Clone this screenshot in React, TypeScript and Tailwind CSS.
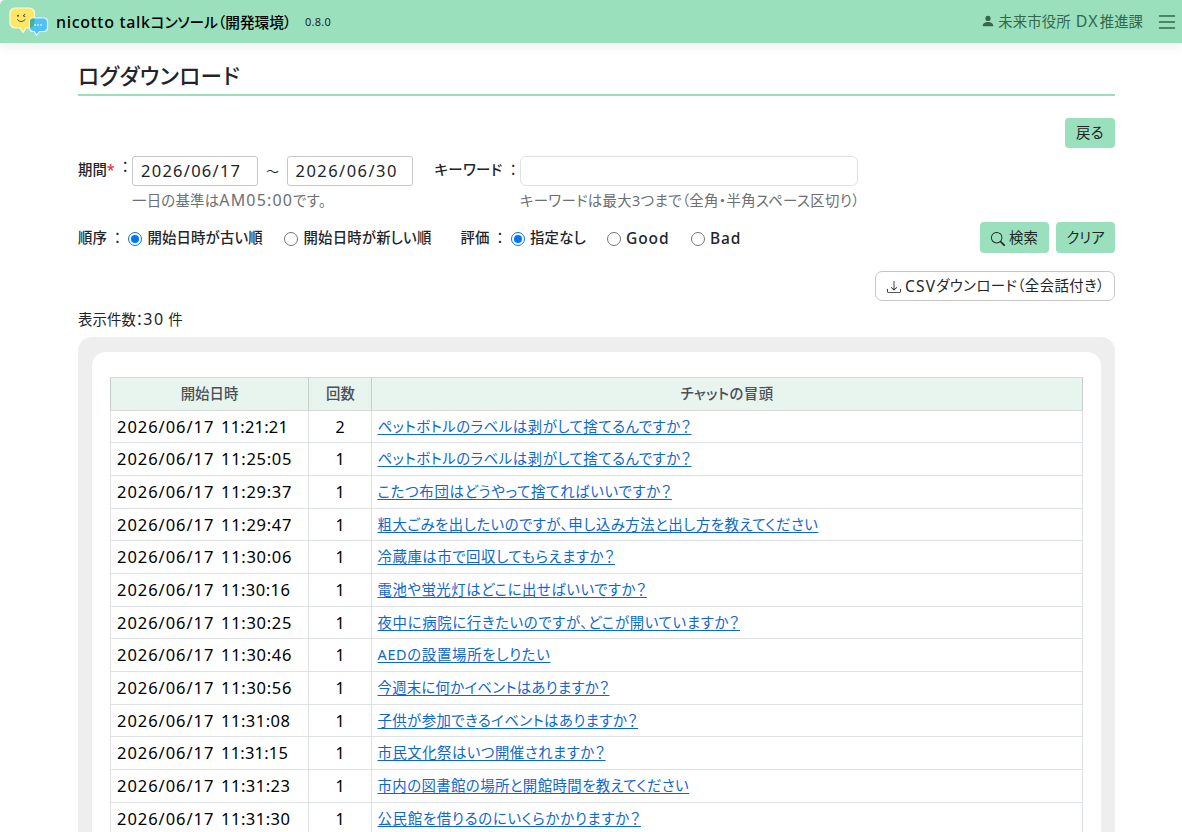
import React from "react";
import { BsDownload, BsList, BsPersonFill, BsSearch } from "react-icons/bs";

type Log = { time: string; timeClass: string; count: number; text: string; textClass: string };

const logs: Log[] = [
  { time: "11:21:21", timeClass: "tracking-[0.2px]", count: 2, text: "ペットボトルのラベルは剥がして捨てるんですか？", textClass: "tracking-[0.54px]" },
  { time: "11:25:05", timeClass: "tracking-[0.7px]", count: 1, text: "ペットボトルのラベルは剥がして捨てるんですか？", textClass: "tracking-[0.54px]" },
  { time: "11:29:37", timeClass: "tracking-[0.7px]", count: 1, text: "こたつ布団はどうやって捨てればいいですか？", textClass: "tracking-[0.71px]" },
  { time: "11:29:47", timeClass: "tracking-[0.7px]", count: 1, text: "粗大ごみを出したいのですが、申し込み方法と出し方を教えてください", textClass: "tracking-[0.5px]" },
  { time: "11:30:06", timeClass: "tracking-[0.7px]", count: 1, text: "冷蔵庫は市で回収してもらえますか？", textClass: "tracking-[0.56px]" },
  { time: "11:30:16", timeClass: "tracking-[0.5px]", count: 1, text: "電池や蛍光灯はどこに出せばいいですか？", textClass: "tracking-[0.54px]" },
  { time: "11:30:25", timeClass: "tracking-[0.7px]", count: 1, text: "夜中に病院に行きたいのですが、どこが開いていますか？", textClass: "tracking-[0.67px]" },
  { time: "11:30:46", timeClass: "tracking-[0.7px]", count: 1, text: "AEDの設置場所をしりたい", textClass: "tracking-[0.7px]" },
  { time: "11:30:56", timeClass: "tracking-[0.7px]", count: 1, text: "今週末に何かイベントはありますか？", textClass: "tracking-[0.27px]" },
  { time: "11:31:08", timeClass: "tracking-[0.5px]", count: 1, text: "子供が参加できるイベントはありますか？", textClass: "tracking-[0.44px]" },
  { time: "11:31:15", timeClass: "tracking-[0.2px]", count: 1, text: "市民文化祭はいつ開催されますか？", textClass: "tracking-[0.5px]" },
  { time: "11:31:23", timeClass: "tracking-[0.5px]", count: 1, text: "市内の図書館の場所と開館時間を教えてください", textClass: "tracking-[0.42px]" },
  { time: "11:31:30", timeClass: "tracking-[0.5px]", count: 1, text: "公民館を借りるのにいくらかかりますか？", textClass: "tracking-[0.72px]" },
];

function Logo() {
  return (
    <svg width="42" height="32" viewBox="0 0 42 32" className="shrink-0">
      <path
        d="M7 2h14.500a5 5 0 0 1 5 5V17a5 5 0 0 1-5 5H18l-3 4.500L12 22H7a5 5 0 0 1-5-5V7a5 5 0 0 1 5-5z"
        fill="#ffe766"
        stroke="#fff8d8"
        strokeWidth="1.200"
      />
      <circle cx="10" cy="9.800" r="1" fill="#4d4a31" />
      <path d="M17 8.300l-2 1.500 2 .7M9.500 13.700q3.700 4 7.500 0" fill="none" stroke="#4d4a31" strokeWidth="1" strokeLinecap="round" />
      <path
        d="M25 12h11a3.500 3.500 0 0 1 3.500 3.500V22a3.500 3.500 0 0 1-3.500 3.500H31.500L28.500 29.500l-2-4H25a3.500 3.500 0 0 1-3.500-3.500v-6.500A3.500 3.500 0 0 1 25 12z"
        fill="#4fc0fb"
        stroke="#e4f7ff"
        strokeWidth="1.200"
      />
      <path d="M25 12.500h1.500V17a5 5 0 0 1-4.500 4.800v-6.300a3 3 0 0 1 3-3z" fill="#47b08c" />
      <g fill="#d9f3ff">
        <circle cx="27" cy="19" r=".9" />
        <circle cx="30" cy="19" r=".9" />
        <circle cx="33" cy="19" r=".9" />
      </g>
    </svg>
  );
}

function Radio({ checked, children, className }: { checked?: boolean; children: React.ReactNode; className: string }) {
  return (
    <label className={`flex items-center whitespace-nowrap font-medium ${className}`}>
      <span
        className={`mr-[5.500px] mt-[3px] flex size-[14px] shrink-0 items-center justify-center rounded-full border bg-white ${
          checked ? "border-[#0075ff]" : "border-[#767676]"
        }`}
      >
        {checked && <span className="size-2 rounded-full bg-[#0075ff]" />}
      </span>
      {children}
    </label>
  );
}

export default function App() {
  return (
    <div className="h-[832px] overflow-hidden bg-white font-['Noto_Sans','Noto_Sans_CJK_JP',sans-serif] text-[14.4px] leading-[22px] text-[#212529] [font-feature-settings:'palt']">
      <header className="flex h-[43px] items-center rounded-tl-[5px] bg-[#9be0bc] pl-[8px] pr-[6px] whitespace-nowrap shadow-[0_2px_12px_rgba(0,0,0,0.09)]">
        <Logo />
        <h1 className="ml-[6px] w-[249px] text-[14.700px] leading-[20px] font-medium text-black">
          <span className="text-[16px] tracking-[0.65px]">nicotto talk</span>コンソール（開発環境）
        </h1>
        <span className="text-[11px] tracking-[0.25px]">0.8.0</span>
        <div className="ml-auto flex items-center text-[#33684e]">
          <BsPersonFill size={14} className="mr-[3px] -mt-[2px]" />
          <span>
            <span className="tracking-[0.1px]">未来市役所</span>
            <span className="ml-[5px] mr-px text-[16px] tracking-[1.200px]">DX</span>推進課
          </span>
          <BsList size={24} className="ml-[12px] -mr-[3px]" />
        </div>
      </header>

      <main className="ml-[78px] w-[1037px] pt-[16px]">
        <h2 className="h-[37px] border-b-2 border-[#9be0bc] text-[21.600px] leading-[34px] font-medium tracking-[0.45px]">ログダウンロード</h2>

        <div className="mt-[22px] flex justify-end">
          <button className="h-[30px] w-[50px] rounded-[4px] bg-[#9be0bc] tracking-[0.3px]">戻る</button>
        </div>

        <div className="mt-[8px] flex h-[57px] items-start whitespace-nowrap">
          <div className="flex w-[54px] pt-[3px] font-medium">
            期間<span className="text-[#dc3545]">*</span>
            <span className="-mt-[3px] ml-[7px] font-normal">：</span>
          </div>
          <div>
            <div className="flex items-center">
              <div className="h-[30px] w-[126px] rounded-[3px] border border-[#c6c6c6] pl-[8px] text-[16.500px] leading-[28px] tracking-[1.250px]">2026/06/17</div>
              <span className="w-[29px] text-center text-[13px]">～</span>
              <div className="h-[30px] w-[126px] rounded-[3px] border border-[#c6c6c6] pl-[7.500px] text-[16.500px] leading-[28px] tracking-[1.450px]">2026/06/30</div>
            </div>
            <div className="mt-[4px] leading-[20px] text-[#6c6f73]">
              <span className="tracking-[0.25px]">一日の基準は</span>
              <span className="text-[16px] tracking-[1.150px]">AM05:00</span>
              <span className="tracking-[0.5px]">です。</span>
            </div>
          </div>
          <div className="ml-[21.500px] flex w-[85.500px] pt-[3px] font-medium tracking-[0.4px]">
            キーワード<span className="ml-[7px] font-normal">：</span>
          </div>
          <div>
            <div className="h-[30px] w-[338px] rounded-[6px] border border-[#dee2e6]" />
            <div className="mt-[4px] text-[#6c6f73] tracking-[0.36px]">キーワードは最大3つまで（全角・半角スペース区切り）</div>
          </div>
        </div>

        <div className="mt-[9px] flex h-[31px] items-center whitespace-nowrap">
          <span className="w-[50px] font-medium">
            順序<span className="ml-[7px] font-normal">：</span>
          </span>
          <Radio checked className="w-[156px] tracking-[0.15px]">開始日時が古い順</Radio>
          <Radio className="w-[176.500px] tracking-[0.2px]">開始日時が新しい順</Radio>
          <span className="w-[50px] font-medium">
            評価<span className="ml-[7px] font-normal">：</span>
          </span>
          <Radio checked className="w-[96px] tracking-[0.2px]">指定なし</Radio>
          <Radio className="w-[84px] text-[15.500px] tracking-[0.9px]">Good</Radio>
          <Radio className="text-[15.500px] tracking-[0.9px]">Bad</Radio>
          <div className="ml-auto flex gap-[7px]">
            <button className="flex h-[31px] w-[69px] items-center justify-center gap-[4px] rounded-[4px] bg-[#9be0bc]">
              <BsSearch size={14} className="mt-[2px]" />
              検索
            </button>
            <button className="h-[31px] w-[59px] rounded-[4px] bg-[#9be0bc]">クリア</button>
          </div>
        </div>

        <div className="mt-[18px] flex justify-end">
          <button className="flex h-[30px] w-[240px] items-center rounded-[7px] border border-[#c6c6c6] pl-[11px] whitespace-nowrap">
            <BsDownload size={14} className="mt-[2px] mr-[4px] shrink-0" />
            <span className="text-[15.500px] tracking-[1.200px]">CSV</span>
            <span className="tracking-[0.42px]">ダウンロード（全会話付き）</span>
          </button>
        </div>

        <p className="mt-[8px] h-[28px] leading-[20px]">
          <span className="tracking-[0.1px]">表示件数：</span>
          <span className="text-[16px] tracking-[1.500px]">30</span> 件
        </p>

        <section className="h-[600px] rounded-t-[14px] bg-[#eee] px-[14px] pt-[15px]">
          <div className="h-full rounded-t-[14px] bg-white pl-[18px] pt-[25px]">
            <div className="w-[973px] border-l border-[#dee2e6]">
              <div className="grid h-[33.670px] grid-cols-[198px_63px_711px] border-y border-[#d5dad9] bg-[#e8f4ee] text-center leading-[32px] font-medium text-[#495057]">
                <div className="-ml-px border-x border-[#c6cbcb]">開始日時</div>
                <div className="border-r border-[#c6cbcb] pl-px">回数</div>
                <div className="border-r border-[#c6cbcb] tracking-[0.45px]">チャットの冒頭</div>
              </div>
              {logs.map((log) => (
                <div key={log.time} className="grid h-[32.667px] grid-cols-[198px_63px_711px] border-b border-[#dee2e6] leading-[31px] whitespace-nowrap">
                  <div className="flex border-r border-[#dee2e6] pl-[6px] text-[16.500px] leading-[32px] text-black">
                    <span className="w-[104px] tracking-[0.95px]">2026/06/17</span>
                    <span className={log.timeClass}>{log.time}</span>
                  </div>
                  <div className="border-r border-[#dee2e6] text-center text-[16px] leading-[32px] text-black">{log.count}</div>
                  <div className="border-r border-[#dee2e6] pl-[5.500px]">
                    <a className={`text-[#0d67d2] underline decoration-1 underline-offset-[2px] ${log.textClass}`}>{log.text}</a>
                  </div>
                </div>
              ))}
            </div>
          </div>
        </section>
      </main>
    </div>
  );
}
